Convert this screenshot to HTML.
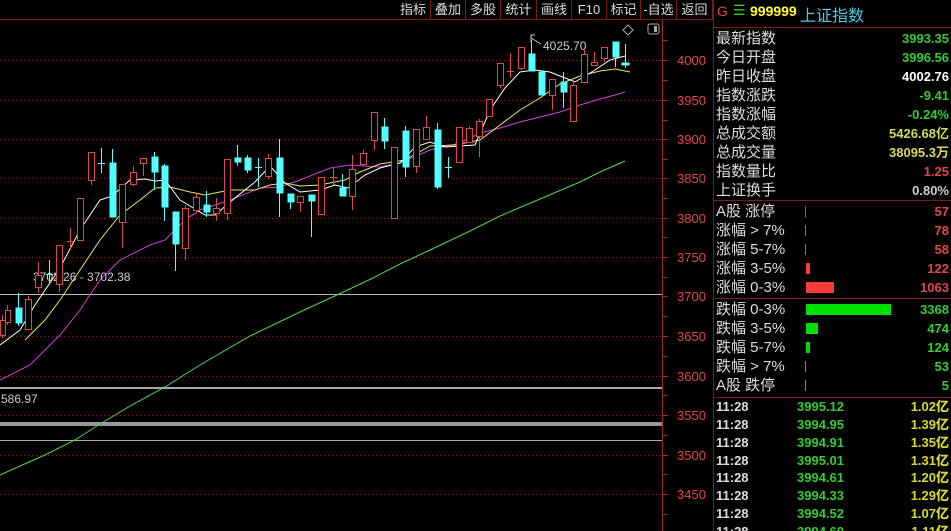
<!DOCTYPE html>
<html><head><meta charset="utf-8"><style>
*{margin:0;padding:0;box-sizing:border-box}
html,body{width:951px;height:531px;overflow:hidden}
body{background:#000;position:relative;font-family:"Liberation Sans","Noto Sans CJK SC",sans-serif}
.tb{position:absolute;top:0;height:19px;border-right:1px solid #7a1a1a;color:#ddd;font-size:13px;line-height:19px;text-align:center}
.r{position:absolute;left:716px;width:233px;height:19px;font-size:15px;line-height:19px;color:#ddd}
.r span{position:absolute;right:0;top:0}
.t{position:absolute;left:716px;width:233px;height:18px;font-size:13px;line-height:18px;color:#ddd;font-weight:bold}
.t .p{position:absolute;left:81px;color:#33cc33}
.t .v{position:absolute;right:0;color:#d8d830}
.bar{position:absolute;left:806px;height:11px;top:4px}
</style></head><body>
<div class="tb" style="left:396px;width:35px">指标</div>
<div class="tb" style="left:431px;width:35px">叠加</div>
<div class="tb" style="left:466px;width:35px">多股</div>
<div class="tb" style="left:501px;width:36px">统计</div>
<div class="tb" style="left:537px;width:35px">画线</div>
<div class="tb" style="left:572px;width:35px">F10</div>
<div class="tb" style="left:607px;width:34px">标记</div>
<div class="tb" style="left:641px;width:36px">-自选</div>
<div class="tb" style="left:677px;width:36px">返回</div>
<svg width="951" height="531" style="position:absolute;left:0;top:0" xmlns="http://www.w3.org/2000/svg">
<g stroke="#7a1a1a" stroke-width="1" fill="none">
<line x1="0" y1="19.5" x2="713" y2="19.5"/>
<line x1="713.5" y1="0" x2="713.5" y2="531"/>
<line x1="713" y1="27.5" x2="951" y2="27.5"/>
<line x1="713" y1="200.5" x2="951" y2="200.5"/>
<line x1="713" y1="298.5" x2="951" y2="298.5"/>
<line x1="713" y1="397.5" x2="951" y2="397.5"/>
<line x1="662.5" y1="19" x2="662.5" y2="531" stroke="#a02828"/>
</g>
<g stroke="#8a2020" stroke-dasharray="1,3">
<line x1="0" y1="60.5" x2="662" y2="60.5"/><line x1="0" y1="100.5" x2="662" y2="100.5"/>
<line x1="0" y1="139.5" x2="662" y2="139.5"/><line x1="0" y1="178.5" x2="662" y2="178.5"/>
<line x1="0" y1="218.5" x2="662" y2="218.5"/><line x1="0" y1="257.5" x2="662" y2="257.5"/>
<line x1="0" y1="336.5" x2="662" y2="336.5"/><line x1="0" y1="376.5" x2="662" y2="376.5"/>
<line x1="0" y1="415.5" x2="662" y2="415.5"/><line x1="0" y1="455.5" x2="662" y2="455.5"/>
<line x1="0" y1="494.5" x2="662" y2="494.5"/>
</g>
<g stroke="#a02828"><line x1="662" y1="40.5" x2="668" y2="40.5"/><line x1="662" y1="60.5" x2="668" y2="60.5"/><line x1="662" y1="80.5" x2="668" y2="80.5"/><line x1="662" y1="100.5" x2="668" y2="100.5"/><line x1="662" y1="120.5" x2="668" y2="120.5"/><line x1="662" y1="139.5" x2="668" y2="139.5"/><line x1="662" y1="159.5" x2="668" y2="159.5"/><line x1="662" y1="178.5" x2="668" y2="178.5"/><line x1="662" y1="198.5" x2="668" y2="198.5"/><line x1="662" y1="218.5" x2="668" y2="218.5"/><line x1="662" y1="237.5" x2="668" y2="237.5"/><line x1="662" y1="257.5" x2="668" y2="257.5"/><line x1="662" y1="277.5" x2="668" y2="277.5"/><line x1="662" y1="296.5" x2="668" y2="296.5"/><line x1="662" y1="316.5" x2="668" y2="316.5"/><line x1="662" y1="336.5" x2="668" y2="336.5"/><line x1="662" y1="356.5" x2="668" y2="356.5"/><line x1="662" y1="376.5" x2="668" y2="376.5"/><line x1="662" y1="395.5" x2="668" y2="395.5"/><line x1="662" y1="415.5" x2="668" y2="415.5"/><line x1="662" y1="435.5" x2="668" y2="435.5"/><line x1="662" y1="455.5" x2="668" y2="455.5"/><line x1="662" y1="474.5" x2="668" y2="474.5"/><line x1="662" y1="494.5" x2="668" y2="494.5"/><line x1="662" y1="514.5" x2="668" y2="514.5"/></g>
<g fill="#e04848" font-size="13" font-family="Liberation Sans,sans-serif">
<text x="677" y="65">4000</text><text x="677" y="105">3950</text><text x="677" y="144">3900</text><text x="677" y="183">3850</text><text x="677" y="223">3800</text><text x="677" y="262">3750</text><text x="677" y="301">3700</text><text x="677" y="341">3650</text><text x="677" y="381">3600</text><text x="677" y="420">3550</text><text x="677" y="460">3500</text><text x="677" y="499">3450</text>
</g>
<line x1="0" y1="294.5" x2="662" y2="294.5" stroke="#bbb"/>
<rect x="0" y="387" width="662" height="2" fill="#aaa"/>
<rect x="0" y="422" width="662" height="4" fill="#999"/>
<line x1="0" y1="440.5" x2="662" y2="440.5" stroke="#aaa"/>
<g fill="none" stroke-width="1">
<polyline stroke="#4fd44f" points="0,475 20,466 45,455 75,440 100,424 130,406 165,387 200,365 250,336 300,312 339,294 371,279 400,264 430,250 470,231 500,216 540,199 580,182 600,172 625,161"/>
<polyline stroke="#d040d0" points="0,380 30,365 60,335 80,310 100,280 120,260 150,245 165,240 185,220 200,210 230,200 260,188 280,187 300,180 330,168 350,165 380,167 400,163 430,150 460,143 480,133 500,128 520,122 540,117 560,112 580,105 600,99 615,95 625,92"/>
<polyline stroke="#e8e860" points="25,340 45,320 60,300 80,270 100,240 120,215 140,200 155,188 170,187 190,192 205,195 230,190 255,190 270,185 285,183 300,186 320,185 345,180 360,172 380,164 405,160 430,146 455,145 480,140 500,125 520,110 540,98 560,84 580,76 600,71 615,69 630,72"/>
<polyline stroke="#ffffff" points="0,345 12,336 20,330 35,305 60,268 80,230 100,200 112,196 130,180 145,179 155,181 165,180 180,200 205,215 215,215 235,198 255,182 270,166 285,183 300,192 320,190 335,185 348,188 365,175 380,168 400,163 415,147 430,142 445,147 475,145 490,110 505,88 520,72 535,70 550,72 565,78 575,82 595,70 610,60 625,56"/>
</g>
<g fill="#ccc" font-size="12"><text x="33" y="281">3702.26 - 3702.38</text><text x="1" y="403">586.97</text><text x="543" y="50">4025.70</text></g>
<path d="M531 42 V35 H535 M531 38 L541 44" fill="none" stroke="#ccc"/>
<path d="M628 25 l5 5 -5 5 -5 -5z" fill="none" stroke="#aaa"/>
<rect x="648" y="24" width="11" height="10" rx="2" fill="none" stroke="#aaa"/><rect x="654" y="26" width="3" height="6" fill="#aaa"/>
<g stroke="#e04848" fill="#000">
<line x1="2.5" y1="315" x2="2.5" y2="338"/><rect x="0.5" y="320.5" width="5" height="15"/>
<line x1="7.5" y1="305" x2="7.5" y2="325"/><rect x="5.5" y="310.5" width="5" height="12"/>
<line x1="28.5" y1="296" x2="28.5" y2="330"/><rect x="25.5" y="299.5" width="6" height="30"/>
<line x1="38.5" y1="262" x2="38.5" y2="293"/><rect x="35.5" y="275.5" width="6" height="12"/>
<line x1="59.5" y1="245" x2="59.5" y2="292"/><rect x="56.5" y="245.5" width="6" height="39"/>
<line x1="70.5" y1="228" x2="70.5" y2="250"/><line x1="67" y1="241.5" x2="74" y2="241.5"/>
<rect x="77.5" y="198.5" width="6" height="42"/>
<line x1="91.5" y1="152" x2="91.5" y2="185"/><rect x="88.5" y="152.5" width="6" height="28"/>
<line x1="122.5" y1="184" x2="122.5" y2="248"/><rect x="119.5" y="184.5" width="6" height="38"/>
<line x1="133.5" y1="166" x2="133.5" y2="186"/><rect x="130.5" y="172.5" width="6" height="12"/>
<line x1="143.5" y1="158" x2="143.5" y2="176"/><rect x="140.5" y="158.5" width="6" height="5"/>
<line x1="185.5" y1="205" x2="185.5" y2="260"/><rect x="182.5" y="208.5" width="6" height="40"/>
<line x1="196.5" y1="194" x2="196.5" y2="213"/><rect x="193.5" y="197.5" width="6" height="13"/>
<line x1="216.5" y1="198" x2="216.5" y2="221"/><rect x="213.5" y="208.5" width="6" height="5"/>
<line x1="227.5" y1="159" x2="227.5" y2="220"/><rect x="224.5" y="159.5" width="6" height="54"/>
<line x1="268.5" y1="154" x2="268.5" y2="179"/><rect x="265.5" y="158.5" width="6" height="18"/>
<line x1="300.5" y1="196" x2="300.5" y2="212"/><rect x="297.5" y="196.5" width="6" height="6"/>
<line x1="321.5" y1="177" x2="321.5" y2="214"/><rect x="318.5" y="177.5" width="6" height="37"/>
<line x1="333.5" y1="167" x2="333.5" y2="185"/><line x1="330" y1="177.5" x2="337" y2="177.5"/>
<line x1="352.5" y1="155" x2="352.5" y2="210"/><rect x="349.5" y="169.5" width="6" height="27"/>
<line x1="363.5" y1="150" x2="363.5" y2="166"/><rect x="360.5" y="153.5" width="6" height="11"/>
<line x1="374.5" y1="112" x2="374.5" y2="150"/><rect x="371.5" y="112.5" width="6" height="28"/>
<rect x="391.5" y="147.5" width="6" height="71"/>
<line x1="416.5" y1="129" x2="416.5" y2="173"/><rect x="413.5" y="129.5" width="6" height="37"/>
<line x1="426.5" y1="116" x2="426.5" y2="140"/><rect x="423.5" y="127.5" width="6" height="12"/>
<line x1="459.5" y1="127" x2="459.5" y2="162"/><rect x="456.5" y="127.5" width="6" height="35"/>
<line x1="469.5" y1="126" x2="469.5" y2="142"/><rect x="466.5" y="128.5" width="6" height="14"/>
<line x1="479.5" y1="119" x2="479.5" y2="157"/><rect x="476.5" y="121.5" width="6" height="15"/>
<rect x="486.5" y="99.5" width="6" height="17"/>
<line x1="500.5" y1="63" x2="500.5" y2="88"/><rect x="497.5" y="63.5" width="6" height="22"/>
<line x1="510.5" y1="53" x2="510.5" y2="78"/><line x1="507" y1="71.5" x2="514" y2="71.5"/>
<line x1="521.5" y1="47" x2="521.5" y2="70"/><rect x="518.5" y="47.5" width="6" height="21"/>
<line x1="552.5" y1="79" x2="552.5" y2="110"/><rect x="549.5" y="79.5" width="6" height="16"/>
<line x1="573.5" y1="80" x2="573.5" y2="122"/><rect x="570.5" y="85.5" width="6" height="36"/>
<line x1="584.5" y1="50" x2="584.5" y2="83"/><rect x="581.5" y="54.5" width="6" height="28"/>
<line x1="594.5" y1="52" x2="594.5" y2="65"/><rect x="591.5" y="62.5" width="6" height="3"/>
<line x1="604.5" y1="47" x2="604.5" y2="62"/><rect x="601.5" y="47.5" width="6" height="11"/>
</g>
<g stroke="#54ffff" fill="#54ffff">
<line x1="18.5" y1="293" x2="18.5" y2="326"/><rect x="16" y="308" width="6" height="15"/>
<line x1="49.5" y1="260" x2="49.5" y2="283"/><line x1="46" y1="274.5" x2="53" y2="274.5"/>
<line x1="101.5" y1="148" x2="101.5" y2="173"/><line x1="98" y1="163.5" x2="105" y2="163.5"/>
<line x1="112.5" y1="149" x2="112.5" y2="217"/><rect x="110" y="163" width="6" height="54"/>
<line x1="154.5" y1="152" x2="154.5" y2="190"/><rect x="152" y="157" width="6" height="15"/>
<line x1="164.5" y1="164" x2="164.5" y2="221"/><rect x="162" y="166" width="6" height="41"/>
<line x1="175.5" y1="212" x2="175.5" y2="271"/><rect x="173" y="212" width="6" height="32"/>
<line x1="206.5" y1="191" x2="206.5" y2="217"/><rect x="204" y="205" width="6" height="7"/>
<line x1="237.5" y1="145" x2="237.5" y2="166"/><rect x="235" y="158" width="6" height="4"/>
<line x1="247.5" y1="155" x2="247.5" y2="173"/><rect x="245" y="158" width="6" height="12"/>
<line x1="258.5" y1="158" x2="258.5" y2="187"/><line x1="255" y1="167.5" x2="262" y2="167.5"/>
<line x1="279.5" y1="139" x2="279.5" y2="217"/><rect x="277" y="158" width="6" height="35"/>
<line x1="290.5" y1="194" x2="290.5" y2="209"/><rect x="288" y="194" width="6" height="8"/>
<line x1="311.5" y1="195" x2="311.5" y2="237"/><rect x="309" y="195" width="6" height="6"/>
<line x1="342.5" y1="174" x2="342.5" y2="196"/><rect x="340" y="188" width="6" height="8"/>
<line x1="384.5" y1="118" x2="384.5" y2="149"/><rect x="382" y="127" width="6" height="14"/>
<line x1="405.5" y1="126" x2="405.5" y2="177"/><rect x="403" y="131" width="6" height="36"/>
<line x1="437.5" y1="123" x2="437.5" y2="189"/><rect x="435" y="130" width="6" height="57"/>
<line x1="448.5" y1="157" x2="448.5" y2="178"/><line x1="445" y1="167.5" x2="452" y2="167.5"/>
<line x1="531.5" y1="40" x2="531.5" y2="71"/><rect x="529" y="54" width="6" height="17"/>
<rect x="539" y="72" width="6" height="23"/>
<line x1="563.5" y1="72" x2="563.5" y2="108"/><rect x="561" y="82" width="6" height="10"/>
<line x1="615.5" y1="42" x2="615.5" y2="67"/><rect x="613" y="42" width="6" height="15"/>
<line x1="625.5" y1="44" x2="625.5" y2="68"/><rect x="622" y="63" width="7" height="2"/>
</g>
<rect x="805" y="206" width="1" height="11" fill="#e04848"/>
<rect x="805" y="225" width="1" height="11" fill="#e04848"/>
<rect x="805" y="244" width="1" height="11" fill="#e04848"/>
<rect x="805" y="380" width="1" height="11" fill="#22cc22"/>
<rect x="805" y="361" width="1" height="11" fill="#22cc22"/>
</svg>
<div style="position:absolute;left:717px;top:3px;font-size:14px;color:#e04848">G</div>
<div style="position:absolute;left:733px;top:2px;font-size:14px;color:#33cc33">☰</div>
<div style="position:absolute;left:750px;top:3px;font-size:14px;color:#ffff33;font-weight:bold">999999</div>
<div style="position:absolute;left:800px;top:2px;font-size:16px;color:#4fc8e0">上证指数</div>
<div class="r" style="top:29px">最新指数<span style="color:#33cc33;font-size:13px;font-weight:bold">3993.35</span></div>
<div class="r" style="top:48px">今日开盘<span style="color:#33cc33;font-size:13px;font-weight:bold">3996.56</span></div>
<div class="r" style="top:67px">昨日收盘<span style="color:#fff;font-size:13px;font-weight:bold">4002.76</span></div>
<div class="r" style="top:86px">指数涨跌<span style="color:#33cc33;font-size:13px;font-weight:bold">-9.41</span></div>
<div class="r" style="top:105px">指数涨幅<span style="color:#33cc33;font-size:13px;font-weight:bold">-0.24%</span></div>
<div class="r" style="top:124px">总成交额<span style="color:#d8d860;font-size:13px;font-weight:bold">5426.68亿</span></div>
<div class="r" style="top:143px">总成交量<span style="color:#d8d860;font-size:13px;font-weight:bold">38095.3万</span></div>
<div class="r" style="top:162px">指数量比<span style="color:#e04848;font-size:13px;font-weight:bold">1.25</span></div>
<div class="r" style="top:181px">上证换手<span style="color:#ccc;font-size:13px;font-weight:bold">0.80%</span></div>
<div class="r" style="top:202px">A股 涨停<span style="color:#e04848;font-size:13px;font-weight:bold">57</span></div>
<div class="r" style="top:221px">涨幅 &gt; 7%<span style="color:#e04848;font-size:13px;font-weight:bold">78</span></div>
<div class="r" style="top:240px">涨幅 5-7%<span style="color:#e04848;font-size:13px;font-weight:bold">58</span></div>
<div class="r" style="top:259px">涨幅 3-5%<span style="color:#e04848;font-size:13px;font-weight:bold">122</span><div class="bar" style="width:4px;left:90px;background:#ff3838"></div></div>
<div class="r" style="top:278px">涨幅 0-3%<span style="color:#e04848;font-size:13px;font-weight:bold">1063</span><div class="bar" style="width:28px;left:90px;background:#ff3838"></div></div>
<div class="r" style="top:300px">跌幅 0-3%<span style="color:#33cc33;font-size:13px;font-weight:bold">3368</span><div class="bar" style="width:85px;left:90px;background:#00e000"></div></div>
<div class="r" style="top:319px">跌幅 3-5%<span style="color:#33cc33;font-size:13px;font-weight:bold">474</span><div class="bar" style="width:12px;left:90px;background:#00e000"></div></div>
<div class="r" style="top:338px">跌幅 5-7%<span style="color:#33cc33;font-size:13px;font-weight:bold">124</span><div class="bar" style="width:4px;left:90px;background:#00e000"></div></div>
<div class="r" style="top:357px">跌幅 &gt; 7%<span style="color:#33cc33;font-size:13px;font-weight:bold">53</span></div>
<div class="r" style="top:376px">A股 跌停<span style="color:#33cc33;font-size:13px;font-weight:bold">5</span></div>
<div class="t" style="top:398px">11:28<b class="p">3995.12</b><b class="v">1.02亿</b></div>
<div class="t" style="top:416px">11:28<b class="p">3994.95</b><b class="v">1.39亿</b></div>
<div class="t" style="top:434px">11:28<b class="p">3994.91</b><b class="v">1.35亿</b></div>
<div class="t" style="top:452px">11:28<b class="p">3995.01</b><b class="v">1.31亿</b></div>
<div class="t" style="top:469px">11:28<b class="p">3994.61</b><b class="v">1.20亿</b></div>
<div class="t" style="top:487px">11:28<b class="p">3994.33</b><b class="v">1.29亿</b></div>
<div class="t" style="top:505px">11:28<b class="p">3994.52</b><b class="v">1.07亿</b></div>
<div class="t" style="top:523px">11:28<b class="p">3994.60</b><b class="v">1.11亿</b></div>
</body></html>
